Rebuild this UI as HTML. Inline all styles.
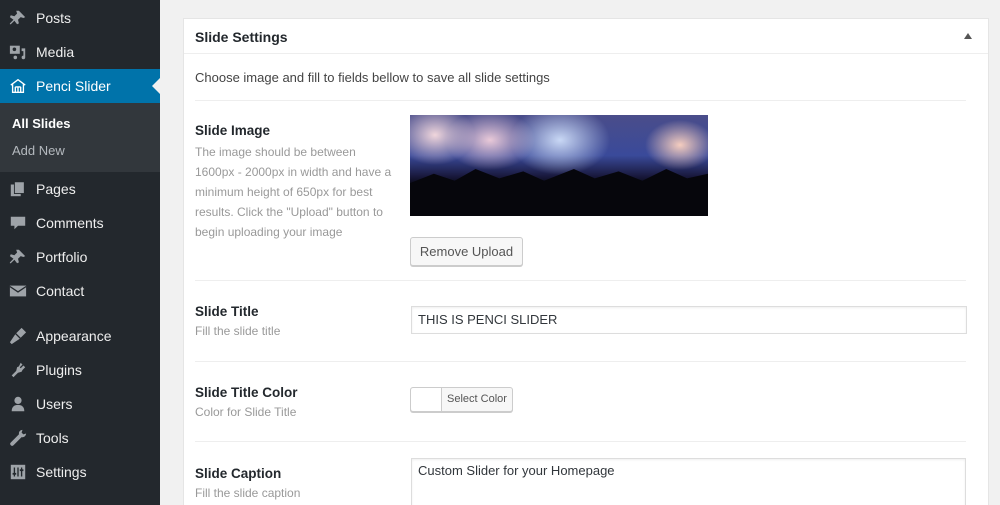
<!DOCTYPE html><html style="overflow:hidden;height:505px"><head><style>
*{box-sizing:border-box}
body{margin:0;width:1000px;height:505px;overflow:hidden;background:#f1f1f1;font-family:"Liberation Sans",sans-serif;position:relative}
.sb{position:absolute;left:0;top:0;width:160px;height:505px;background:#23282d}
.it{position:absolute;left:0;width:160px;height:34px;color:#eee;font-size:14px;line-height:34px}
.it span{position:absolute;left:36px}
.ic{position:absolute;left:9px;top:8px;width:18px;height:18px;color:#9ea3a8}
.sub{position:absolute;left:0;top:103px;width:160px;height:69px;background:#32373c}
.p{position:absolute;left:183px;top:18px;width:806px;height:500px;background:#fff;border:1px solid #e5e5e5}
.t{position:absolute;font-size:14px;color:#23282d}
.b{font-weight:bold}
.d{position:absolute;font-size:12px;color:#999;line-height:20px}
.hr{position:absolute;left:11px;right:22px;height:1px;background:#eee}
.inp{position:absolute;border:1px solid #ddd;box-shadow:inset 0 1px 2px rgba(0,0,0,.07);background:#fff;font-size:14px;color:#32373c}
</style></head><body>
<div class="sb">
<div class="it" style="top:1px"><svg class="ic" viewBox="0 0 20 20"><path fill="#9ea3a8" d="M11 2l7 7-2 1-3-1-3 3 1 4-2 1-3-4-4 4-1 0 0-1 4-4-4-3 1-2 4 1 3-3-1-3z"/></svg><span>Posts</span></div>
<div class="it" style="top:35px"><svg class="ic" viewBox="0 0 20 20"><rect x="1" y="3" width="11" height="9" fill="#9ea3a8"/><circle cx="6" cy="7" r="2" fill="#23282d"/><path fill="#9ea3a8" d="M14 6h4v10a2 2 0 1 1-2-2V9h-2z"/><circle cx="7" cy="16" r="2" fill="#9ea3a8"/></svg><span>Media</span></div>
<div class="it" style="top:69px;background:#0073aa;color:#fff"><svg class="ic" viewBox="0 0 20 20"><path fill="none" stroke="#fff" stroke-width="1.5" d="M2 9L10 3l8 6M4 8v9h12V8M7 17v-6M10 17v-6M13 17v-6M7 11h6"/></svg><span>Penci Slider</span></div>
<div style="position:absolute;left:152px;top:78px;border:8px solid transparent;border-right-color:#f1f1f1;border-left:0"></div>
<div class="sub"></div>
<div class="it b" style="top:108px;color:#fff;font-size:13px;line-height:32px"><span style="left:12px">All Slides</span></div>
<div class="it" style="top:135px;color:#b4b9be;font-size:13px;line-height:32px"><span style="left:12px">Add New</span></div>
<div class="it" style="top:172px"><svg class="ic" viewBox="0 0 20 20"><rect x="2" y="5" width="11" height="13" fill="#9ea3a8"/><rect x="6" y="2" width="11" height="13" fill="#9ea3a8" stroke="#23282d"/></svg><span>Pages</span></div>
<div class="it" style="top:206px"><svg class="ic" viewBox="0 0 20 20"><path fill="#9ea3a8" d="M2 3h16v10H10l-4 4v-4H2z"/></svg><span>Comments</span></div>
<div class="it" style="top:240px"><svg class="ic" viewBox="0 0 20 20"><path fill="#9ea3a8" d="M11 2l7 7-2 1-3-1-3 3 1 4-2 1-3-4-4 4-1 0 0-1 4-4-4-3 1-2 4 1 3-3-1-3z"/></svg><span>Portfolio</span></div>
<div class="it" style="top:274px"><svg class="ic" viewBox="0 0 20 20"><rect x="1" y="4" width="18" height="12" fill="#9ea3a8"/><path d="M1 5l9 6 9-6" fill="none" stroke="#23282d" stroke-width="1.5"/></svg><span>Contact</span></div>
<div class="it" style="top:319px"><svg class="ic" viewBox="0 0 20 20"><path fill="#9ea3a8" d="M14 1l5 5-6 6-5-5zM7 8l5 5-3 2-6 4-2-2 4-6z"/></svg><span>Appearance</span></div>
<div class="it" style="top:353px"><svg class="ic" viewBox="0 0 20 20"><path fill="#9ea3a8" d="M13 2l2 2-3 3 1 1 3-3 2 2-3 3-1 2-4 1-3 3-2 2-2-2 2-2 3-3 1-4 2-1z"/></svg><span>Plugins</span></div>
<div class="it" style="top:387px"><svg class="ic" viewBox="0 0 20 20"><circle cx="10" cy="6" r="4" fill="#9ea3a8"/><path fill="#9ea3a8" d="M3 18c0-5 3-7 7-7s7 2 7 7z"/></svg><span>Users</span></div>
<div class="it" style="top:421px"><svg class="ic" viewBox="0 0 20 20"><path fill="#9ea3a8" d="M15 1a4 4 0 0 0-4 5L2 15a2 2 0 0 0 3 3l9-9a4 4 0 0 0 5-4l-3 1-2-2z"/></svg><span>Tools</span></div>
<div class="it" style="top:455px"><svg class="ic" viewBox="0 0 20 20"><rect x="2" y="2" width="16" height="16" fill="#9ea3a8"/><path d="M6 5v10M10 5v10M14 5v10" stroke="#23282d" stroke-width="1.5"/><rect x="4" y="11" width="4" height="2" fill="#23282d"/><rect x="12" y="7" width="4" height="2" fill="#23282d"/></svg><span>Settings</span></div>
</div>
<div class="p">
<div class="t b" style="left:11px;top:10px">Slide Settings</div>
<div style="position:absolute;right:16px;top:14px;border:4px solid transparent;border-bottom:6px solid #555;border-top:0"></div>
<div style="position:absolute;left:0;right:0;top:34px;height:1px;background:#eee"></div>
<div class="t" style="left:11px;top:51px;font-size:13px;color:#444">Choose image and fill to fields bellow to save all slide settings</div>
<div class="hr" style="top:81px"></div>
<div class="t b" style="left:11px;top:104px;font-size:13.5px">Slide Image</div>
<div class="d" style="left:11px;top:123px;width:200px">The image should be between 1600px - 2000px in width and have a minimum height of 650px for best results. Click the "Upload" button to begin uploading your image</div>
<div style="position:absolute;left:226px;top:96px;width:298px;height:101px;background:radial-gradient(ellipse 40px 30px at 25px 20px,#f0d6dc,transparent),radial-gradient(ellipse 45px 30px at 80px 25px,#e9c9d8,transparent),radial-gradient(ellipse 50px 35px at 150px 25px,#c9d8f5,transparent),radial-gradient(ellipse 35px 25px at 270px 30px,#f5cdbf,transparent),linear-gradient(#4a4d8a,#3a4a9a 40%,#1a1a40 60%,#06060e 70%,#050508)"></div>
<div style="position:absolute;left:226px;top:150px;width:298px;height:47px;background:#06060c;clip-path:polygon(0 30%,8% 10%,15% 25%,22% 0,30% 20%,38% 5%,45% 25%,55% 0,62% 20%,70% 5%,78% 25%,86% 0,93% 20%,100% 10%,100% 100%,0 100%)"></div>
<div style="position:absolute;left:226px;top:218px;width:113px;height:29px;border:1px solid #ccc;border-radius:3px;background:#f7f7f7;box-shadow:0 1px 0 #ccc;font-size:13px;line-height:27px;text-align:center;color:#555">Remove Upload</div>
<div class="hr" style="top:261px"></div>
<div class="t b" style="left:11px;top:285px;font-size:13.5px">Slide Title</div>
<div class="d" style="left:11px;top:302px">Fill the slide title</div>
<div class="inp" style="left:227px;top:287px;width:556px;height:28px;line-height:26px;padding-left:6px;font-size:13px">THIS IS PENCI SLIDER</div>
<div class="hr" style="top:342px"></div>
<div class="t b" style="left:11px;top:366px;font-size:13.5px">Slide Title Color</div>
<div class="d" style="left:11px;top:383px">Color for Slide Title</div>
<div style="position:absolute;left:226px;top:368px;width:103px;height:25px;border:1px solid #ccc;border-radius:3px;background:#f7f7f7;box-shadow:0 1px 0 #ccc"><div style="position:absolute;left:0;top:0;width:31px;height:23px;background:#fff;border-right:1px solid #ccc;border-radius:3px 0 0 3px"></div><div style="position:absolute;left:31px;right:0;text-align:center;font-size:11px;line-height:23px;color:#555">Select Color</div></div>
<div class="hr" style="top:422px"></div>
<div class="t b" style="left:11px;top:447px;font-size:13.5px">Slide Caption</div>
<div class="d" style="left:11px;top:464px">Fill the slide caption</div>
<div class="inp" style="left:227px;top:439px;width:555px;height:70px;padding:4px 6px;font-size:13px">Custom Slider for your Homepage</div>
</div>
</body></html>
